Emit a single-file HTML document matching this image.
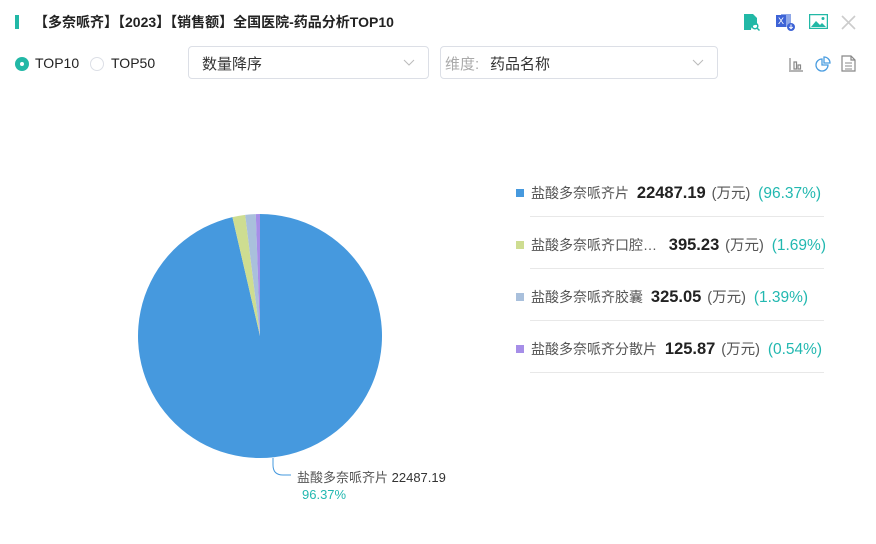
<!DOCTYPE html>
<html><head><meta charset="utf-8"><style>
*{margin:0;padding:0;box-sizing:border-box}
body{width:876px;height:544px;background:#fff;font-family:"Liberation Sans","Noto Sans CJK SC",sans-serif;position:relative;overflow:hidden;color:#333}
.a{position:absolute;white-space:nowrap}
.sel{position:absolute;border:1px solid #dcdfe6;border-radius:4px;height:33px;top:46px}
.leg{position:absolute;left:516px;font-size:14px;color:#555;white-space:nowrap;line-height:20px}
.leg i{display:inline-block;width:8px;height:8px;margin-right:7px;vertical-align:1px}
.leg b{color:#222;font-size:16.5px;margin:0 2px 0 4px}
.leg .u{font-size:14.5px}
.leg .p{color:#22b8b0;font-size:15.5px;margin-left:4px}
.line{position:absolute;left:530px;width:294px;height:1px;background:#e8e8e8}
</style></head><body>
<div class="a" style="left:15px;top:15px;width:4px;height:14px;background:#22b8a6"></div>
<div class="a" style="left:34px;top:12px;font-size:14px;font-weight:bold;color:#222">【多奈哌齐】【2023】【销售额】全国医院-药品分析TOP10</div>
<div class="a" style="left:15px;top:57px;width:14px;height:14px;border-radius:50%;background:#22b8a6"></div>
<div class="a" style="left:20px;top:62px;width:4px;height:4px;border-radius:50%;background:#fff"></div>
<div class="a" style="left:35px;top:55px;font-size:14px;color:#222">TOP10</div>
<div class="a" style="left:90px;top:57px;width:14px;height:14px;border-radius:50%;border:1px solid #dcdfe6"></div>
<div class="a" style="left:111px;top:55px;font-size:14px;color:#222">TOP50</div>
<div class="sel" style="left:188px;width:241px"><span class="a" style="left:13px;top:6px;font-size:15px;color:#333">数量降序</span>
<svg class="a" style="left:214px;top:12px" width="12" height="8"><path d="M1 1l5 5 5-5" fill="none" stroke="#bbb" stroke-width="1"/></svg></div>
<div class="sel" style="left:440px;width:278px"><span class="a" style="left:4px;top:6px;font-size:15px;color:#aaa">维度:</span><span class="a" style="left:49px;top:6px;font-size:15px;color:#333">药品名称</span>
<svg class="a" style="left:251px;top:12px" width="12" height="8"><path d="M1 1l5 5 5-5" fill="none" stroke="#bbb" stroke-width="1"/></svg></div>
<svg class="a" style="left:743px;top:13px" width="18" height="18"><path d="M1 1h9l4 4v7a5 5 0 0 0-6 5H1z" fill="#22b8a6"/><circle cx="12" cy="13" r="2.8" fill="none" stroke="#22b8a6" stroke-width="1.5"/><path d="M14 15l2.5 2.5" stroke="#22b8a6" stroke-width="1.5"/></svg>
<svg class="a" style="left:776px;top:13px" width="20" height="18"><rect x="5" y="1" width="10" height="13" fill="#8fa8e8"/><rect x="0" y="2" width="10" height="12" fill="#3d63d6"/><text x="2" y="11" font-size="9" fill="#fff" font-family="Liberation Sans">X</text><circle cx="15" cy="14" r="4" fill="#3d63d6"/><path d="M15 11.5v4M13.3 14l1.7 1.7 1.7-1.7" stroke="#fff" stroke-width="1" fill="none"/></svg>
<svg class="a" style="left:809px;top:14px" width="19" height="15"><rect x="0.5" y="0.5" width="18" height="14" fill="none" stroke="#22b8a6" stroke-width="1.5"/><path d="M2 13l5-6 4 4 2-2 4 4z" fill="#22b8a6"/><circle cx="14" cy="4.5" r="1.5" fill="#22b8a6"/></svg>
<svg class="a" style="left:841px;top:15px" width="15" height="15"><path d="M1 1l13 13M14 1L1 14" stroke="#ccc" stroke-width="1.6"/></svg>
<svg class="a" style="left:788px;top:56px" width="16" height="16"><path d="M1 15h14M2 2v12M6 6v7h2.5V6zM10 9v4h2.5V9z" fill="none" stroke="#888" stroke-width="1.2"/></svg>
<svg class="a" style="left:815px;top:56px" width="16" height="16"><path d="M7 3a6 6 0 1 0 6 6H7z" fill="none" stroke="#4a9de0" stroke-width="1.3"/><path d="M9 1v6h6a6 6 0 0 0-6-6z" fill="none" stroke="#4a9de0" stroke-width="1.3"/></svg>
<svg class="a" style="left:841px;top:55px" width="15" height="17"><path d="M1 1h9l4 4v11H1z M10 1v4h4" fill="none" stroke="#888" stroke-width="1.2"/><path d="M4 8h7M4 11h7M4 14h7" stroke="#888" stroke-width="1"/></svg>
<svg class="a" style="left:0;top:0" width="876" height="544">
<path d="M260 336L260 214A122 122 0 1 1 232.42 217.16Z" fill="#4699de"/>
<path d="M260 336L232.42 217.16A122 122 0 0 1 245.18 214.9Z" fill="#cedd91"/>
<path d="M260 336L245.18 214.9A122 122 0 0 1 255.79 214.07Z" fill="#a9c0dc"/>
<path d="M260 336L255.79 214.07A122 122 0 0 1 260 214Z" fill="#a68ee8"/>
<path d="M273 458v7q0 10 10 10h8" fill="none" stroke="#4699de" stroke-width="1"/>
</svg>
<div class="a" style="left:297px;top:467px;font-size:13px;color:#555">盐酸多奈哌齐片 <span style="color:#333">22487.19</span></div>
<div class="a" style="left:302px;top:487px;font-size:13px;color:#22b8b0">96.37%</div>
<div class="leg" style="top:183px"><i style="background:#4699de"></i>盐酸多奈哌齐片 <b>22487.19</b> <span class="u">(万元)</span> <span class="p">(96.37%)</span></div>
<div class="line" style="top:216px"></div>
<div class="leg" style="top:235px"><i style="background:#cedd91"></i>盐酸多奈哌齐口腔… &nbsp;<b>395.23</b> <span class="u">(万元)</span> <span class="p">(1.69%)</span></div>
<div class="line" style="top:268px"></div>
<div class="leg" style="top:287px"><i style="background:#a9c0dc"></i>盐酸多奈哌齐胶囊 <b>325.05</b> <span class="u">(万元)</span> <span class="p">(1.39%)</span></div>
<div class="line" style="top:320px"></div>
<div class="leg" style="top:339px"><i style="background:#a68ee8"></i>盐酸多奈哌齐分散片 <b>125.87</b> <span class="u">(万元)</span> <span class="p">(0.54%)</span></div>
<div class="line" style="top:372px"></div>
</body></html>
